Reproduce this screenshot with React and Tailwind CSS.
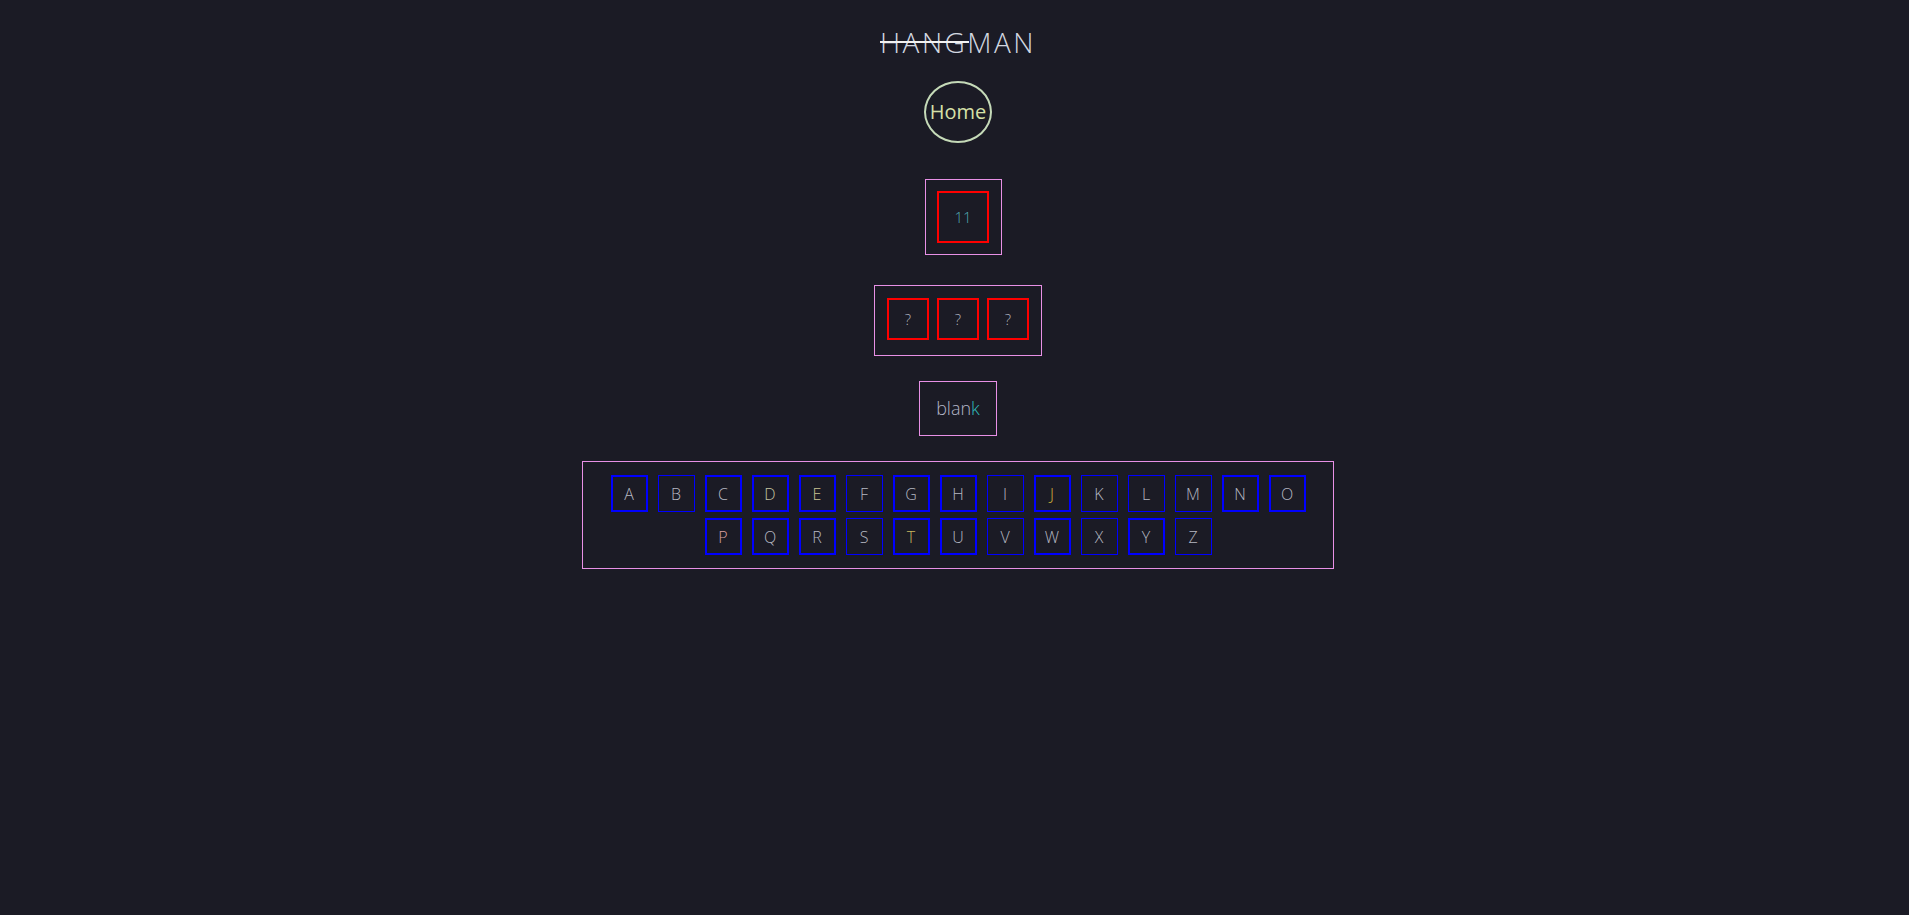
import React from "react";

const row1 = "ABCDEFGHIJKLMNO".split("");
const row2 = "PQRSTUVWXYZ".split("");
const thick = new Set(["A","C","D","E","G","H","J","N","O","P","Q","R","T","U","W","Y"]);
const colors = {
  J: "text-[#d2b43a]",
  T: "text-[#c9b860]",
  P: "text-[#dba0a0]",
  E: "text-[#cac592]",
  D: "text-[#c6c6a2]",
};

function Key({ l }) {
  return (
    <div
      className={
        "w-[37px] h-[37px] flex items-center justify-center border-[#0000ff] text-[16px] " +
        (thick.has(l) ? "border-2 " : "border ") +
        (colors[l] || "text-[#b6b8c2]")
      }
    >
      {l}
    </div>
  );
}

export default function App() {
  return (
    <div
      className="min-h-[915px] w-full bg-[#1b1b25] flex flex-col items-center font-light pl-[7px]"
      style={{ fontFamily: '"Open Sans", "Noto Sans", sans-serif' }}
    >
      <div className="mt-[21px] relative h-[42px] flex items-center text-[28px] tracking-[2.5px] text-[#d2d8e0] leading-none">
        <span>HANGMAN</span>
        <span className="absolute left-[0px] top-[20px] w-[89px] h-[2px] bg-[#f2f2f2]"></span>
      </div>

      <div className="mt-[18px] w-[68px] h-[62px] rounded-[50%] border-2 border-[#c5dab8] flex items-center justify-center text-[20px] text-[#d6e0a8] font-normal">
        Home
      </div>

      <div className="mt-[36px] ml-[10px] w-[77px] h-[76px] border border-[#e890e6] flex items-center justify-center">
        <div className="w-[52px] h-[52px] border-2 border-[#ff0000] flex items-center justify-center text-[15px] text-[#52aab0]">
          11
        </div>
      </div>

      <div className="mt-[30px] w-[168px] h-[71px] border border-[#e890e6] pt-[12px] pl-[12px] flex gap-[8px] items-start">
        {[0, 1, 2].map((i) => (
          <div key={i} className="w-[42px] h-[42px] border-2 border-[#ff0000] flex items-center justify-center text-[15px] text-[#b0b2be]">
            ?
          </div>
        ))}
      </div>

      <div className="mt-[25px] w-[78px] h-[55px] border border-[#e890e6] flex items-center justify-center text-[18px] text-[#b4b6c8]">
        blan<span className="text-[#2fb8b8]">k</span>
      </div>

      <div className="mt-[25px] w-[752px] h-[108px] border border-[#e890e6] pt-[13px] flex flex-col items-center gap-[6px]">
        <div className="flex gap-[10px]">
          {row1.map((l) => (
            <Key key={l} l={l} />
          ))}
        </div>
        <div className="flex gap-[10px]">
          {row2.map((l) => (
            <Key key={l} l={l} />
          ))}
        </div>
      </div>
    </div>
  );
}
